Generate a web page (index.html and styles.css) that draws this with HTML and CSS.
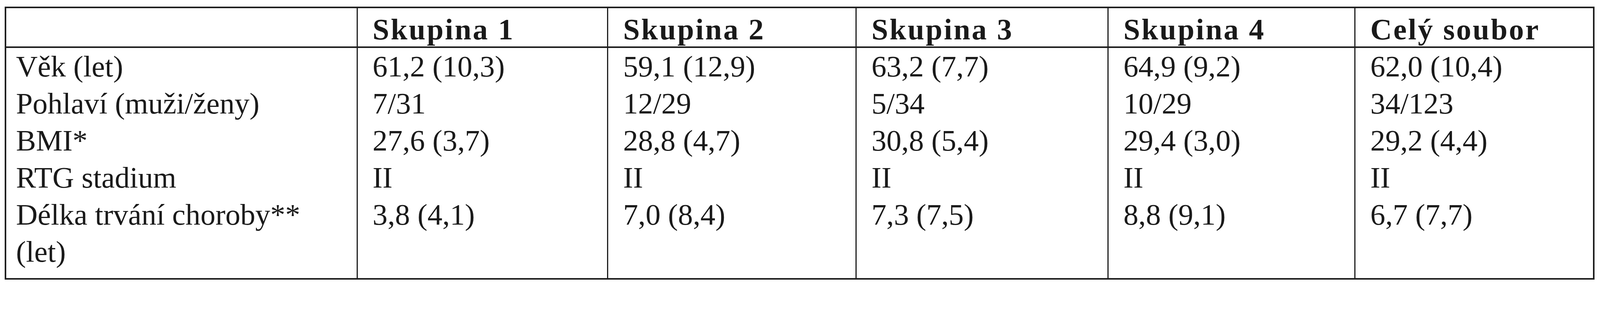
FILE: index.html
```html
<!DOCTYPE html>
<html lang="cs">
<head>
<meta charset="utf-8">
<title>Tabulka</title>
<link rel="stylesheet" href="styles.css">
</head>
<body>
<table class="data">
  <thead>
    <tr>
      <th class="w1"></th>
      <th class="w2">Skupina 1</th>
      <th class="w3">Skupina 2</th>
      <th class="w4">Skupina 3</th>
      <th class="w5">Skupina 4</th>
      <th class="w6">Celý soubor</th>
    </tr>
  </thead>
  <tbody>
    <tr>
      <td>Věk (let)</td>
      <td>61,2 (10,3)</td>
      <td>59,1 (12,9)</td>
      <td>63,2 (7,7)</td>
      <td>64,9 (9,2)</td>
      <td>62,0 (10,4)</td>
    </tr>
    <tr>
      <td>Pohlaví (muži/ženy)</td>
      <td>7/31</td>
      <td>12/29</td>
      <td>5/34</td>
      <td>10/29</td>
      <td>34/123</td>
    </tr>
    <tr>
      <td>BMI*</td>
      <td>27,6 (3,7)</td>
      <td>28,8 (4,7)</td>
      <td>30,8 (5,4)</td>
      <td>29,4 (3,0)</td>
      <td>29,2 (4,4)</td>
    </tr>
    <tr>
      <td>RTG stadium</td>
      <td>II</td>
      <td>II</td>
      <td>II</td>
      <td>II</td>
      <td>II</td>
    </tr>
    <tr class="last">
      <td>Délka trvání choroby** (let)</td>
      <td>3,8 (4,1)</td>
      <td>7,0 (8,4)</td>
      <td>7,3 (7,5)</td>
      <td>8,8 (9,1)</td>
      <td>6,7 (7,7)</td>
    </tr>
  </tbody>
</table>
</body>
</html>
```

FILE: styles.css
```css
:root {
  /* one reference pixel, scaled to the frame width */
  --u: calc(100vw / 4437);
}

html {
  background: #ffffff;
  overflow: hidden;
}

body {
  margin: calc(18 * var(--u)) 0 0 calc(13 * var(--u));
  font-family: "Liberation Serif", "Times New Roman", serif;
  color: #1a1a1a;
  background: #ffffff;
}

.data {
  border-collapse: separate;
  border-spacing: 0;
  table-layout: fixed;
  width: calc(4409 * var(--u));
  border: calc(4.5 * var(--u)) solid #1e1e1e;
  font-size: calc(83 * var(--u));
}

.data th,
.data td {
  text-align: left;
  vertical-align: top;
  padding: 0 calc(30 * var(--u)) 0 calc(41 * var(--u));
  border-left: calc(4 * var(--u)) solid #1e1e1e;
  white-space: normal;
}

.data th:first-child,
.data td:first-child {
  border-left: none;
  padding-left: calc(27 * var(--u));
  padding-right: calc(40 * var(--u));
}

.data th {
  font-weight: bold;
  letter-spacing: calc(4 * var(--u));
  line-height: calc(93 * var(--u));
  padding-top: calc(13.5 * var(--u));
  padding-bottom: 0;
  border-bottom: calc(4.5 * var(--u)) solid #1e1e1e;
}

.data td {
  font-weight: normal;
  line-height: calc(103 * var(--u));
}

.data tr.last td {
  padding-bottom: calc(21.5 * var(--u));
}

/* content widths: column width minus padding and divider */
.w1 { width: calc(904 * var(--u)); }
.w2 { width: calc(620 * var(--u)); }
.w3 { width: calc(614 * var(--u)); }
.w4 { width: calc(624 * var(--u)); }
.w5 { width: calc(610 * var(--u)); }
.w6 { width: calc(587 * var(--u)); }
```
